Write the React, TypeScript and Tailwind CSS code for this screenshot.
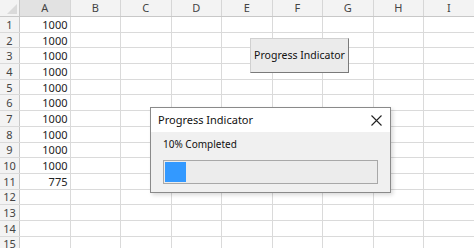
import React from 'react';

const COLS = ['A', 'B', 'C', 'D', 'E', 'F', 'G', 'H', 'I'];
const VALUES: Record<number, string> = {
  1: '1000', 2: '1000', 3: '1000', 4: '1000', 5: '1000',
  6: '1000', 7: '1000', 8: '1000', 9: '1000', 10: '1000', 11: '775',
};
const ROWS = Array.from({ length: 15 }, (_, i) => i + 1);

export default function App() {
  return (
    <div
      className="relative w-[474px] h-[248px] overflow-hidden bg-white text-[11px] text-[#222]"
      style={{ fontFamily: '"Noto Sans", "Open Sans", Arial, sans-serif' }}
    >
      {/* column headers */}
      <div className="flex h-[17px] bg-[#f3f3f3] border-b border-[#c8c8c8]">
        <div className="relative w-[20px] shrink-0 border-r border-[#c8c8c8]">
          <div className="absolute right-[2px] bottom-[2px] w-0 h-0 border-l-[10px] border-l-transparent border-b-[10px] border-b-[#dadada]" />
        </div>
        {COLS.map((c) => (
          <div
            key={c}
            className={`w-[50.5px] shrink-0 flex items-center justify-center border-r border-[#d6d6d6] text-[#444] ${c === 'A' ? 'bg-[#e2e2e2]' : ''}`}
          >
            {c}
          </div>
        ))}
      </div>

      {/* rows */}
      {ROWS.map((r) => (
        <div key={r} className="flex h-[15.7px] border-b border-[#dadada]">
          <div className="w-[20px] shrink-0 flex items-center justify-center bg-[#f3f3f3] border-r border-[#c8c8c8] text-[#444] leading-none">
            {r}
          </div>
          {COLS.map((c) => (
            <div
              key={c}
              className="w-[50.5px] shrink-0 flex items-center justify-end pr-[2px] border-r border-[#dadada] leading-none"
            >
              {c === 'A' ? VALUES[r] ?? '' : ''}
            </div>
          ))}
        </div>
      ))}

      {/* form button on sheet */}
      <div className="absolute left-[250px] top-[38px] w-[99px] h-[35px] flex items-center justify-center whitespace-nowrap bg-[#ebebeb] border border-[#d0d0d0] border-r-[#7a7a7a] border-b-[#7a7a7a] text-[10.5px] text-[#111]">
        Progress Indicator
      </div>

      {/* progress dialog */}
      <div className="absolute left-[150px] top-[107px] w-[241px] h-[86px] border border-[#8a8a8a] bg-[#f0f0f0] shadow-[2px_2px_4px_rgba(0,0,0,0.15)] flex flex-col">
        <div className="h-[24px] bg-white flex items-center justify-between pl-[7px] pr-[8px]">
          <span className="text-[11px] text-[#111] whitespace-nowrap">Progress Indicator</span>
          <svg width="11" height="11" viewBox="0 0 11 11" className="text-[#222]">
            <path d="M0.5 0.5 L10.5 10.5 M10.5 0.5 L0.5 10.5" stroke="currentColor" strokeWidth="1.1" fill="none" />
          </svg>
        </div>
        <div className="flex-1 px-[12px] pt-[5px]">
          <div className="text-[10px] text-[#111] leading-[14px] whitespace-nowrap">10% Completed</div>
          <div className="mt-[9px] h-[24px] w-[215px] border border-[#a8a8a8] bg-[#ececec] p-[1px]">
            <div className="h-full w-[21px] bg-[#3399ff]" />
          </div>
        </div>
      </div>
    </div>
  );
}
